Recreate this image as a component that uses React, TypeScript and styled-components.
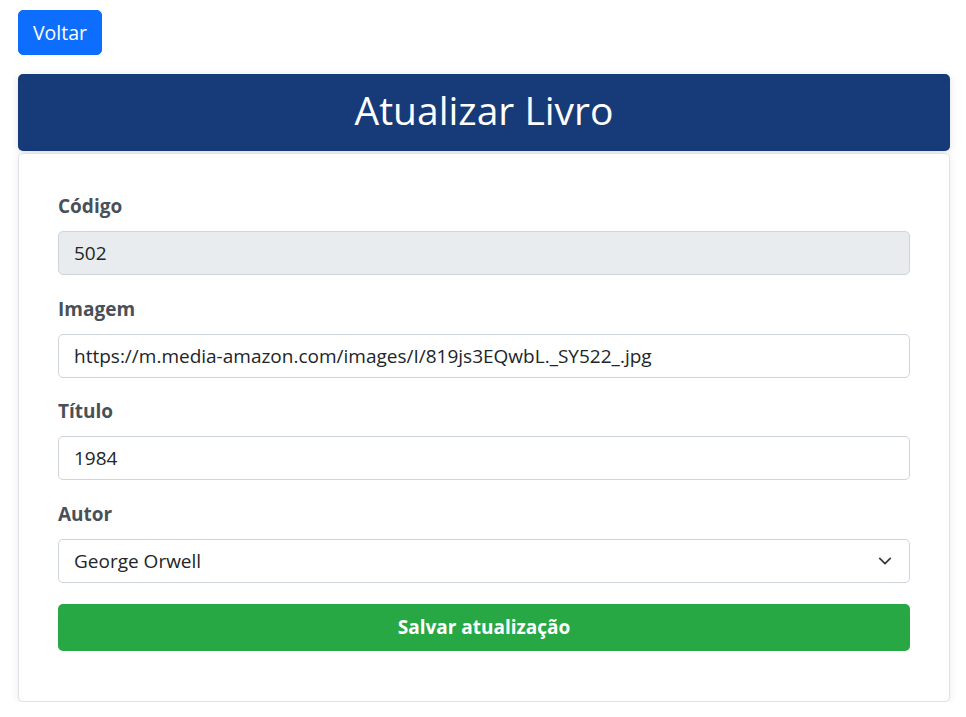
import React from "react";
import styled, { createGlobalStyle } from "styled-components";

const GlobalStyle = createGlobalStyle`
    html, body {
        margin: 0;
        padding: 0;
        background: #ffffff;
        font-family: "Open Sans", "Liberation Sans", sans-serif;
        color: #212529;
    }
    * {
        box-sizing: border-box;
    }
`;

const Page = styled.div`
    padding: 10px 16px 0 18px;
    display: flex;
    flex-direction: column;
    align-items: flex-start;
`;

const BackButton = styled.button`
    font-family: inherit;
    font-size: 19.5px;
    line-height: 27px;
    padding: 8px 0;
    height: 45px;
    width: 84px;
    border: 1px solid #0d6efd;
    background: #0d6efd;
    color: #ffffff;
    border-radius: 5px;
    cursor: pointer;
`;

const Wrapper = styled.div`
    margin-top: 19px;
    width: 932px;
    display: flex;
    flex-direction: column;
    gap: 2px;
`;

const Header = styled.div`
    height: 77px;
    padding-bottom: 5px;
    background: #173a78;
    border-radius: 5px;
    display: flex;
    align-items: center;
    justify-content: center;
    box-shadow: 0 2px 8px rgba(0, 0, 0, 0.12);
`;

const Title = styled.h1`
    margin: 0;
    color: #ffffff;
    font-size: 39px;
    font-weight: 400;
    line-height: 1.2;
`;

const Card = styled.form`
    background: #ffffff;
    border: 1px solid #dee2e6;
    border-radius: 5px;
    box-shadow: 0 2px 10px rgba(0, 0, 0, 0.08);
    padding: 39px 39px 50px;
    display: flex;
    flex-direction: column;
`;

const Field = styled.div`
    display: flex;
    flex-direction: column;
    margin-bottom: 20.7px;
`;

const Label = styled.label`
    font-size: 19px;
    font-weight: 700;
    line-height: 27px;
    color: #495057;
    margin-bottom: 11px;
`;

const Input = styled.input`
    font-family: inherit;
    font-size: 19px;
    line-height: 27px;
    height: 44px;
    padding: 8px 15px;
    color: #212529;
    background: ${(p) => (p.disabled ? "#e9ecef" : "#ffffff")};
    border: 1px solid #ced4da;
    border-radius: 5px;
    outline: none;
    width: 100%;
`;

const SelectBox = styled.div`
    position: relative;
`;

const Select = styled.select`
    font-family: inherit;
    font-size: 19px;
    line-height: 27px;
    height: 44px;
    width: 100%;
    padding: 8px 40px 8px 15px;
    color: #212529;
    background: #ffffff;
    border: 1px solid #ced4da;
    border-radius: 5px;
    appearance: none;
    outline: none;
`;

const Chevron = styled.svg`
    position: absolute;
    right: 18px;
    top: 15px;
    pointer-events: none;
`;

const SaveButton = styled.button`
    font-family: inherit;
    font-size: 19px;
    font-weight: 700;
    line-height: 27px;
    height: 47px;
    border: none;
    border-radius: 5px;
    background: #28a745;
    color: #ffffff;
    cursor: pointer;
`;

function App() {
    return (
        <Page>
            <GlobalStyle />
            <BackButton type="button">Voltar</BackButton>
            <Wrapper>
                <Header>
                    <Title>Atualizar Livro</Title>
                </Header>
                <Card onSubmit={(e) => e.preventDefault()}>
                    <Field>
                        <Label>Código</Label>
                        <Input value="502" disabled readOnly />
                    </Field>
                    <Field>
                        <Label>Imagem</Label>
                        <Input defaultValue="https://m.media-amazon.com/images/I/819js3EQwbL._SY522_.jpg" />
                    </Field>
                    <Field>
                        <Label>Título</Label>
                        <Input defaultValue="1984" />
                    </Field>
                    <Field>
                        <Label>Autor</Label>
                        <SelectBox>
                            <Select defaultValue="orwell">
                                <option value="orwell">George Orwell</option>
                            </Select>
                            <Chevron width="14" height="14" viewBox="0 0 16 16">
                                <path
                                    d="M2 5l6 6 6-6"
                                    fill="none"
                                    stroke="#343a40"
                                    strokeWidth="2"
                                    strokeLinecap="round"
                                    strokeLinejoin="round"
                                />
                            </Chevron>
                        </SelectBox>
                    </Field>
                    <SaveButton type="submit">Salvar atualização</SaveButton>
                </Card>
            </Wrapper>
        </Page>
    );
}

export default App;
